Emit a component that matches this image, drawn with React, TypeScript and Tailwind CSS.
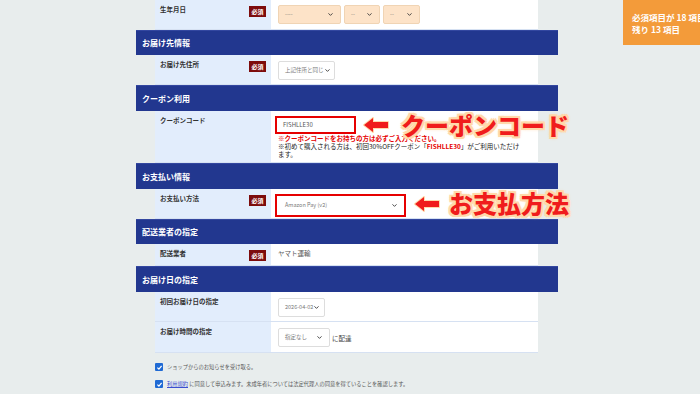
import { ChevronDown } from 'lucide-react';

const font = "font-['Noto_Sans_CJK_JP','Noto_Sans',sans-serif]";
const glow =
  '[text-shadow:2px_0_0_#ffd9ab,-2px_0_0_#ffd9ab,0_2px_0_#ffd9ab,0_-2px_0_#ffd9ab,2px_2px_0_#ffd9ab,-2px_-2px_0_#ffd9ab,2px_-2px_0_#ffd9ab,-2px_2px_0_#ffd9ab,0_0_4px_#ffc68a]';

function Badge() {
  return (
    <span className="mt-[1px] flex h-[11px] w-[17px] items-center justify-center bg-[#7d0c0c] text-[6px] font-bold leading-none text-white">
      必須
    </span>
  );
}

function Select({ text, className }: { text: string; className: string }) {
  return (
    <div
      className={`flex h-[19px] items-center justify-between whitespace-nowrap rounded-[2px] border px-[6px] text-[5.5px] leading-none text-[#777] ${className}`}
    >
      <span>{text}</span>
      <ChevronDown className="h-[7px] w-[7px] shrink-0 text-[#333]" strokeWidth={3} />
    </div>
  );
}

function Header({ title, h }: { title: string; h: string }) {
  return (
    <div className={`flex items-center border-t border-[#3347a0] bg-[#22378f] pl-[6px] text-[8px] font-bold text-white ${h}`}>
      {title}
    </div>
  );
}

function Row({
  label,
  required,
  h,
  children,
}: {
  label: string;
  required?: boolean;
  h: string;
  children: React.ReactNode;
}) {
  return (
    <div className={`ml-[19px] flex w-[383px] border-b border-[#d6e1f2] ${h}`}>
      <div className="flex w-[116px] items-start justify-between bg-[#e2edfc] pl-[5px] pr-[5px] pt-[5px]">
        <span className="text-[6.5px] font-bold leading-[8px] text-[#333]">{label}</span>
        {required && <Badge />}
      </div>
      <div className="flex-1 bg-white pl-[7px] pt-[5px] text-[6.5px] leading-[8px]">{children}</div>
    </div>
  );
}

function Arrow() {
  return (
    <svg viewBox="0 0 26 16" className="h-[16px] w-[26px]">
      <polygon
        points="1,8 10,1 10,5 25,5 25,11 10,11 10,15"
        fill="#f01c1c"
        stroke="#ffd9ab"
        strokeWidth="2"
        strokeLinejoin="round"
        paintOrder="stroke"
      />
    </svg>
  );
}

function Check() {
  return (
    <span className="flex h-[8px] w-[8px] shrink-0 items-center justify-center rounded-[1px] bg-[#1f6ad4]">
      <svg viewBox="0 0 10 10" className="h-[7px] w-[7px]">
        <path d="M2 5.2 L4.2 7.3 L8 2.8" fill="none" stroke="white" strokeWidth="1.8" />
      </svg>
    </span>
  );
}

export default function App() {
  return (
    <div className={`relative h-[394px] w-[700px] overflow-hidden bg-[#e8eded] ${font}`}>
      <div className="ml-[136px] flex w-[422px] flex-col">
        <Row label="生年月日" required h="h-[30px]">
          <div className="flex gap-[3px]">
            <Select text="----" className="w-[63px] border-[#f0d4b4] bg-[#fde3c8]" />
            <Select text="--" className="w-[36px] border-[#f0d4b4] bg-[#fde3c8]" />
            <Select text="--" className="w-[37px] border-[#f0d4b4] bg-[#fde3c8]" />
          </div>
        </Row>
        <Header title="お届け先情報" h="h-[25px]" />
        <Row label="お届け先住所" required h="h-[30px]">
          <div className="pt-[1px]">
            <Select text="上記住所と同じ" className="w-[57px] border-[#dddddd] bg-white" />
          </div>
        </Row>
        <Header title="クーポン利用" h="h-[26px]" />
        <Row label="クーポンコード" h="h-[52px]">
          <div className="-ml-[3px] flex h-[18px] w-[81px] items-center border-2 border-[#e60000] bg-white pl-[6px] text-[6px] text-[#555]">
            FISHLLE30
          </div>
          <div className="pr-[16px]">
            <p className="font-bold text-[#e60000]">※クーポンコードをお持ちの方は必ずご入力ください。</p>
            <p className="text-[#222]">
              ※初めて購入される方は、初回30%OFFクーポン「
              <span className="font-bold text-[#e60000]">FISHLLE30</span>
              」がご利用いただけます。
            </p>
          </div>
        </Row>
        <Header title="お支払い情報" h="h-[26px]" />
        <Row label="お支払い方法" required h="h-[30px]">
          <div className="-ml-[3px] w-[131px] border-2 border-[#e60000]">
            <Select text="Amazon Pay (v2)" className="h-[17px] w-full rounded-none border-none bg-white pl-[8px]" />
          </div>
        </Row>
        <Header title="配送業者の指定" h="h-[25px]" />
        <Row label="配送業者" required h="h-[22px]">
          <span className="text-[#555]">ヤマト運輸</span>
        </Row>
        <Header title="お届け日の指定" h="h-[26px]" />
        <Row label="初回お届け日の指定" h="h-[30px]">
          <div className="pt-[1px]">
            <Select text="2026-04-02" className="w-[47px] border-[#dddddd] bg-white text-[#444]" />
          </div>
        </Row>
        <Row label="お届け時間の指定" h="h-[31px]">
          <div className="flex items-center gap-[2px] pt-[1px]">
            <Select text="指定なし" className="w-[52px] border-[#dddddd] bg-white" />
            <span className="text-[#444]">に配達</span>
          </div>
        </Row>
      </div>

      <div className="ml-[155px] mt-[10px] flex flex-col gap-[9px] text-[5.25px] leading-[8px] text-[#555]">
        <label className="flex items-center gap-[4px]">
          <Check />
          <span>ショップからのお知らせを受け取る。</span>
        </label>
        <label className="flex items-center gap-[4px]">
          <Check />
          <span>
            <span className="text-[#3a4fd0] underline">利用規約</span>{' '}
            に同意して申込みます。未成年者については法定代理人の同意を得ていることを確認します。
          </span>
        </label>
      </div>

      {/* remaining count badge */}
      <div className="absolute left-[623px] top-0 h-[45px] w-[77px] whitespace-nowrap bg-[#f39b3a] pl-[9px] pt-[11px] text-[8.5px] font-bold leading-[12px] text-white">
        <p>必須項目が 18 項目</p>
        <p>残り 13 項目</p>
      </div>

      {/* annotations */}
      <div className="absolute left-[363px] top-[117px]">
        <Arrow />
      </div>
      <div className={`absolute left-[401px] top-[112px] text-[24px] font-black leading-[26px] text-[#f01c1c] ${glow}`}>
        クーポンコード
      </div>
      <div className="absolute left-[414px] top-[196px]">
        <Arrow />
      </div>
      <div className={`absolute left-[449px] top-[190px] text-[24px] font-black leading-[26px] text-[#f01c1c] ${glow}`}>
        お支払方法
      </div>
    </div>
  );
}
